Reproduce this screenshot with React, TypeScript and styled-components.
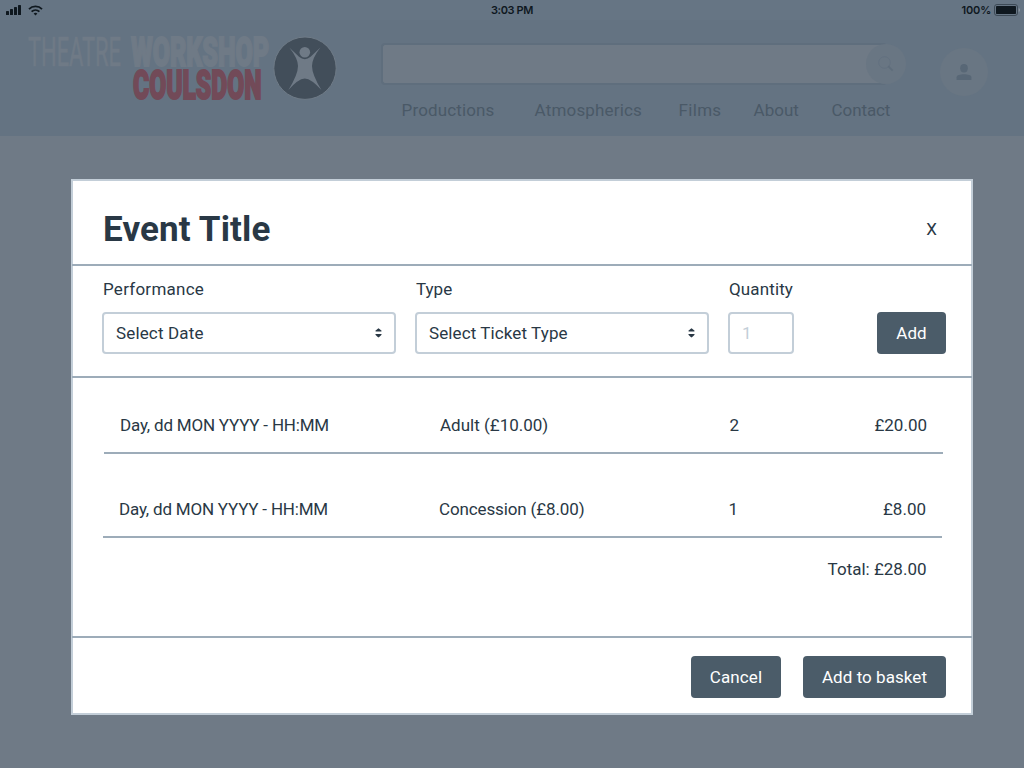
import React from "react";
import styled, { createGlobalStyle } from "styled-components";

const color = {
  page: "#6f7a86",
  header: "#647382",
  statusBar: "#667584",
  ink: "#293845",
  button: "#4b5c69",
  fieldBorder: "#c3ced8",
  rule: "#9dacb9",
  navText: "#4a5967",
};

const GlobalStyle = createGlobalStyle`
  * { box-sizing: border-box; }
  body {
    margin: 0;
    background: ${color.page};
    font-family: Roboto, "Liberation Sans", sans-serif;
    font-size: 17px;
    line-height: 20px;
    color: ${color.ink};
  }
  svg { display: block; }
`;

const Page = styled.div`
  width: 1024px;
  height: 768px;
  overflow: hidden;
  display: flex;
  flex-direction: column;
  background: ${color.page};
`;

const Text = styled.span<{ $track?: number }>`
  letter-spacing: ${(p) => p.$track ?? 0}px;
  white-space: nowrap;
`;

/* Status bar */

const StatusBar = styled.div`
  height: 20px;
  flex: none;
  display: grid;
  grid-template-columns: 1fr auto 1fr;
  align-items: center;
  padding: 0 6px;
  background: ${color.statusBar};
  color: #0f181f;
  font-family: Inter, sans-serif;
  font-size: 11px;
  font-weight: 600;
`;

const StatusGroup = styled.div<{ $end?: boolean }>`
  display: flex;
  align-items: center;
  justify-content: ${(p) => (p.$end ? "flex-end" : "flex-start")};
  gap: ${(p) => (p.$end ? 3 : 7)}px;
  margin-right: ${(p) => (p.$end ? -2 : 0)}px;
`;

/* Site header */

const SiteHeader = styled.header`
  height: 116px;
  flex: none;
  display: flex;
  align-items: flex-start;
  background: ${color.header};
`;

const Brand = styled.div`
  width: 381px;
  padding: 2px 0 0 20px;
`;

const LogoArt = styled.svg`
  overflow: visible;
  font-family: Roboto, sans-serif;
  font-size: 41px;
`;

const SearchAndNav = styled.div`
  width: 525px;
  padding-top: 23px;
`;

const SearchBar = styled.div`
  position: relative;
  width: 506px;
  height: 42px;
  border: 2px solid #5f6e7d;
  border-right: 0;
  border-radius: 4px;
  background: ${color.page};
`;

const RoundButton = styled.button<{ $size: number }>`
  width: ${(p) => p.$size}px;
  height: ${(p) => p.$size}px;
  display: flex;
  align-items: center;
  justify-content: center;
  padding: 0;
  border: 0;
  border-radius: 50%;
  background: #697683;
`;

const SearchButton = styled(RoundButton)`
  position: absolute;
  top: -1px;
  right: -19px;
`;

const Nav = styled.nav`
  display: grid;
  grid-template-columns: 133px 144px 75px 78px auto;
  padding: 15px 0 0 20.6px;
  color: ${color.navText};
`;

const Account = styled.div`
  padding: 28px 0 0 34px;
`;

/* Dialog */

const Dialog = styled.section`
  width: 902px;
  height: 536px;
  flex: none;
  margin: 43px 0 0 71px;
  display: flex;
  flex-direction: column;
  border: 2px solid ${color.fieldBorder};
  background: #fff;
`;

const Section = styled.div<{ $height: number }>`
  height: ${(p) => p.$height}px;
  flex: none;
  margin: 0 -1px;
  border-bottom: 2px solid ${color.rule};
`;

const TitleSection = styled(Section)`
  display: flex;
  align-items: center;
  justify-content: space-between;
  padding: 13px 35px 0 31px;
`;

const Title = styled.h1`
  margin: 0;
  padding-top: 2px;
  font-size: 35px;
  font-weight: 700;
  line-height: 42px;
  letter-spacing: 0.15px;
`;

const CloseButton = styled.button`
  padding: 0;
  border: 0;
  background: none;
  color: inherit;
  font: inherit;
`;

const FormSection = styled(Section)`
  display: flex;
  align-items: flex-end;
  padding: 0 26px 22px 30px;
`;

const Field = styled.label<{ $width: number }>`
  width: ${(p) => p.$width}px;
  margin-right: 19px;
  display: flex;
  flex-direction: column;
  gap: 13px;
`;

const FieldLabel = styled(Text)`
  padding-left: 1px;
`;

const Control = styled.div<{ $placeholder?: boolean }>`
  height: 42px;
  display: flex;
  align-items: center;
  justify-content: space-between;
  padding: 0 12px;
  border: 2px solid ${color.fieldBorder};
  border-radius: 4px;
  color: ${(p) => (p.$placeholder ? color.fieldBorder : color.ink)};
`;

const Button = styled.button<{ $width: number }>`
  width: ${(p) => p.$width}px;
  height: 42px;
  flex: none;
  padding: 0;
  border: 0;
  border-radius: 4px;
  background: ${color.button};
  color: #fff;
  font: inherit;
`;

const AddButton = styled(Button)`
  margin-left: auto;
`;

const BasketSection = styled(Section)`
  padding: 20px 30px 0 32px;
`;

const Line = styled.div<{ $first?: boolean }>`
  width: 839px;
  height: ${(p) => (p.$first ? 56 : 84)}px;
  margin-left: ${(p) => (p.$first ? 0 : -1)}px;
  display: grid;
  grid-template-columns: 320px 289.6px 1fr auto;
  align-items: end;
  padding: 0 16px 17px;
  border-bottom: 2px solid ${color.rule};
`;

const Total = styled.div`
  padding: 21px 15.5px 0 0;
  text-align: right;
`;

const Footer = styled.div`
  flex: 1;
  display: flex;
  justify-content: flex-end;
  gap: 22px;
  padding: 18px 25px 0 0;
`;

const SignalIcon = () => (
  <svg width="15" height="10" viewBox="0 0 15 10" fill="#0f181f">
    <rect x="0" y="6" width="3" height="4" rx="0.6" />
    <rect x="4" y="4" width="3" height="6" rx="0.6" />
    <rect x="8" y="2" width="3" height="8" rx="0.6" />
    <rect x="12" y="0" width="3" height="10" rx="0.6" />
  </svg>
);

const WifiIcon = () => (
  <svg width="15" height="11" viewBox="0 0 15 11" fill="none" stroke="#0f181f" strokeWidth="1.8">
    <path d="M1 4.1 C4.5 0.5 10.5 0.5 14 4.1" />
    <path d="M3.6 6.7 C5.8 4.5 9.2 4.5 11.4 6.7" />
    <path d="M5.6 8.4 Q7.5 7 9.4 8.4 L7.5 10.5 Z" fill="#0f181f" stroke="none" />
  </svg>
);

const BatteryIcon = () => (
  <svg width="26" height="12" viewBox="0 0 26 12">
    <rect x="0.5" y="0.5" width="23" height="11" rx="2.5" fill="none" stroke="#3d4a56" />
    <rect x="2" y="2" width="20" height="8" rx="0.8" fill="#0f181f" />
    <path d="M24.7 4 Q26 4.5 26 6 Q26 7.5 24.7 8 Z" fill="#8c97a2" />
  </svg>
);

const Logo = () => (
  <LogoArt width="320" height="94" viewBox="20 22 320 94">
    <text x="28" y="66" fontWeight="400" fill="#6f7a86" stroke="#6f7a86" strokeWidth="0.7" textLength="93" lengthAdjust="spacingAndGlyphs">
      THEATRE
    </text>
    <text x="131" y="65.7" fontWeight="900" fill="#6f7a86" stroke="#6f7a86" strokeWidth="2" textLength="138" lengthAdjust="spacingAndGlyphs">
      WORKSHOP
    </text>
    <text x="133" y="99.3" fontWeight="900" fill="#724a58" stroke="#724a58" strokeWidth="2" textLength="128.5" lengthAdjust="spacingAndGlyphs">
      COULSDON
    </text>
    <circle cx="305" cy="68.2" r="31.2" fill="#424e5a" stroke="#6f7b87" strokeWidth="1" />
    <g fill="#6f7a86">
      <circle cx="304.8" cy="52.2" r="5.3" />
      <path d="M289.3 47.5 L299 56.8 Q304.8 61.5 310.6 56.8 L320.4 47.5 Q312 58.5 312 66 Q312 74.5 321.4 90 Q311.5 78.8 304.8 78.4 Q298 78.8 288.4 90 Q298 74.5 298 66 Q298 58.5 289.3 47.5 Z" />
    </g>
  </LogoArt>
);

const SearchIcon = () => (
  <svg width="16" height="16" viewBox="0 0 16 16" fill="none">
    <circle cx="6.5" cy="6.5" r="5.8" stroke="#637180" strokeWidth="1" />
    <path d="M10.2 10.2 L14.7 14.7" stroke="#5f6d7b" strokeWidth="1.8" />
  </svg>
);

const UserIcon = () => (
  <svg width="16" height="16" viewBox="0 0 16 16" fill="#586776">
    <ellipse cx="8" cy="4.2" rx="3.8" ry="4.2" />
    <path d="M0.6 16 V13.2 C0.6 9.4 15.4 9.4 15.4 13.2 V16 Z" />
  </svg>
);

const SortIcon = () => (
  <svg width="7" height="10" viewBox="0 0 7 10" fill={color.ink}>
    <path d="M3.5 0.2 Q4 0.2 6.6 2.8 Q6.8 3.6 6 3.6 H1 Q0.2 3.6 0.4 2.8 Q3 0.2 3.5 0.2 Z" />
    <path d="M3.5 9.4 Q4 9.4 6.6 6.8 Q6.8 6 6 6 H1 Q0.2 6 0.4 6.8 Q3 9.4 3.5 9.4 Z" />
  </svg>
);

const links = [
  { label: "Productions", track: 0.13 },
  { label: "Atmospherics", track: 0.17 },
  { label: "Films", track: 0.3 },
  { label: "About", track: 0 },
  { label: "Contact", track: -0.1 },
];

const tickets = [
  { type: "Adult (£10.00)", track: 0, quantity: 2, price: "£20.00" },
  { type: "Concession (£8.00)", track: -0.13, quantity: 1, price: "£8.00" },
];

export default function App() {
  return (
    <Page>
      <GlobalStyle />
      <StatusBar>
        <StatusGroup>
          <SignalIcon />
          <WifiIcon />
        </StatusGroup>
        <Text $track={-0.4}>3:03 PM</Text>
        <StatusGroup $end>
          <Text $track={-0.2}>100%</Text>
          <BatteryIcon />
        </StatusGroup>
      </StatusBar>

      <SiteHeader>
        <Brand>
          <Logo />
        </Brand>
        <SearchAndNav>
          <SearchBar>
            <SearchButton $size={40} aria-label="Search">
              <SearchIcon />
            </SearchButton>
          </SearchBar>
          <Nav>
            {links.map((l) => (
              <Text key={l.label} $track={l.track}>
                {l.label}
              </Text>
            ))}
          </Nav>
        </SearchAndNav>
        <Account>
          <RoundButton $size={48} aria-label="Account">
            <UserIcon />
          </RoundButton>
        </Account>
      </SiteHeader>

      <Dialog>
        <TitleSection $height={85}>
          <Title>Event Title</Title>
          <CloseButton>X</CloseButton>
        </TitleSection>

        <FormSection $height={112}>
          <Field $width={294}>
            <FieldLabel $track={0.25}>Performance</FieldLabel>
            <Control>
              <Text $track={0.15}>Select Date</Text>
              <SortIcon />
            </Control>
          </Field>
          <Field $width={294}>
            <FieldLabel $track={0}>Type</FieldLabel>
            <Control>
              <Text $track={0.1}>Select Ticket Type</Text>
              <SortIcon />
            </Control>
          </Field>
          <Field $width={66}>
            <FieldLabel $track={0.13}>Quantity</FieldLabel>
            <Control $placeholder>
              <Text>1</Text>
            </Control>
          </Field>
          <AddButton $width={69}>
            <Text $track={0}>Add</Text>
          </AddButton>
        </FormSection>

        <BasketSection $height={260}>
          {tickets.map((t, i) => (
            <Line key={t.type} $first={i === 0}>
              <Text $track={-0.2}>Day, dd MON YYYY - HH:MM</Text>
              <Text $track={t.track}>{t.type}</Text>
              <Text>{t.quantity}</Text>
              <Text>{t.price}</Text>
            </Line>
          ))}
          <Total>
            <Text>Total: £28.00</Text>
          </Total>
        </BasketSection>

        <Footer>
          <Button $width={90}>
            <Text $track={0.1}>Cancel</Text>
          </Button>
          <Button $width={143}>
            <Text $track={0.05}>Add to basket</Text>
          </Button>
        </Footer>
      </Dialog>
    </Page>
  );
}
